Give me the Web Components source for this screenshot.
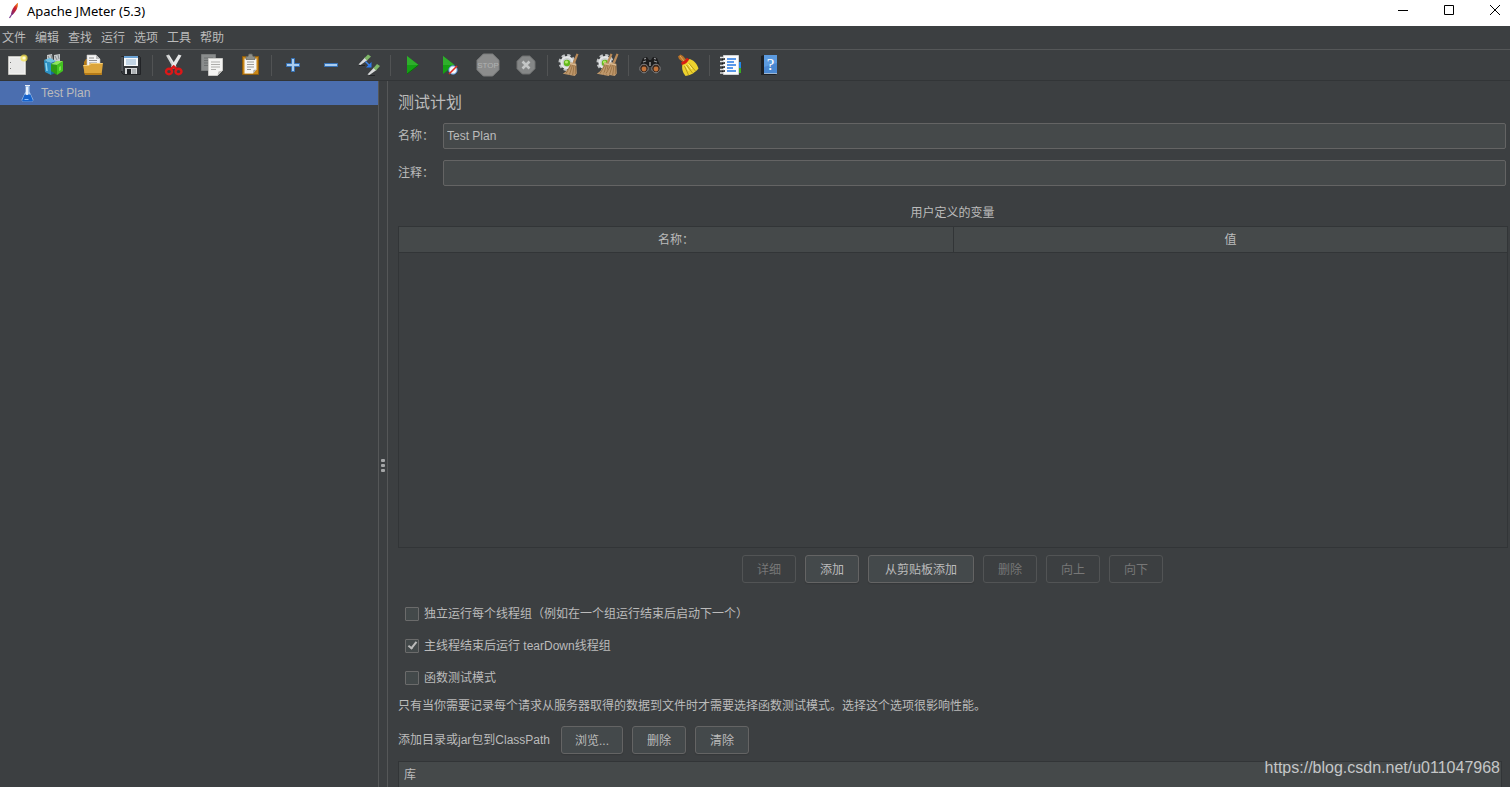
<!DOCTYPE html>
<html lang="zh-CN">
<head>
<meta charset="utf-8">
<title>Apache JMeter (5.3)</title>
<style>
  html, body { margin: 0; height: 100%; }
  body {
    --bg: #3c3f41; --fg: #bbbbbb; --field: #45494a; --edge: #646464;
    --dark: #323537; --line: #555758; --select: #4b6eaf; --dim: #777777;
    background: var(--bg); color: var(--fg);
    font: 12px/20px "Liberation Sans", "Noto Sans CJK SC", sans-serif;
  }
</style>
</head>
<body>
<jm-app></jm-app>
<script>
const define = (name, html, setup) => {
  const tpl = document.createElement('template');
  tpl.innerHTML = html;
  customElements.define(name, class extends HTMLElement {
    constructor() {
      super();
      this.attachShadow({ mode: 'open' }).append(tpl.content.cloneNode(true));
    }
    connectedCallback() { if (setup) setup(this, this.shadowRoot); }
  });
};

const GEAR = `
  <circle cx="10" cy="9.500" r="7" fill="none" stroke="#c3c6c7" stroke-width="3" stroke-dasharray="3.2 2.3"/>
  <circle cx="10" cy="9.500" r="6.600" fill="#e3e5e6"/><circle cx="10" cy="9.500" r="4.600" fill="#c9cdce"/>
  <circle cx="10" cy="10" r="3.200" fill="#62b81c"/><circle cx="9.500" cy="9" r="1.600" fill="#b4ea6a"/>`;
const BROOM = `
  <path d="M19.500 .5l2 .8-3.600 9.300-2.400-.9z" fill="#b98a58"/>
  <path d="M13.500 9.300l5.800 1.400.5 9.800-2 2.500-12-2.300c4-2 6.500-6 7.700-11.400z" fill="#bf986c"/>
  <path d="M14 12l-5 8.500M15.500 12l-3 9.500M17 12l-1.300 10M18.500 13l-.2 8" stroke="#8d6538" stroke-width=".7" fill="none"/>
  <path d="M13.200 10.500l6 1.500" stroke="#e0c299" stroke-width="1"/>`;
const OCT = 'M7.300 1h9.400L23 7.300v9.400L16.700 23H7.300L1 16.700V7.300z';

const ICONS = {
  'new': `<path d="M3.500 3.500h17v18h-17z" fill="#f0f0ef" stroke="#c2c2bd"/><path d="M5 5h14v15H5z" fill="#e8e8e7"/>
    <path d="M5 9h1v1H5zM5 15h1v1H5z" fill="#777"/>
    <circle cx="19" cy="5" r="3.600" fill="#f4e14c" opacity=".75"/><circle cx="19" cy="5" r="1.600" fill="#fffbd0"/>`,
  templates: `<path d="M4 2l5-1 1 7-6 1zM11 2l6-1v7l-6 1z" fill="#c5c9cb"/><path d="M5 3l2 4M12 3l2 4M8 2l1 4M15 2l1 4" stroke="#858b8e"/>
    <path d="M1 7l7 3v12l-6-3z" fill="#2d92c4"/><path d="M8 10l4-2v12l-4 2z" fill="#1a6a9a"/><path d="M1 7l6-2 6 3-5 2z" fill="#6ec0e4"/><path d="M3 10l1 8" stroke="#8fd6f2" stroke-width="1.500"/>
    <path d="M8 11l6 1v10l-6-4z" fill="#2f9a14"/><path d="M14 12l6-4v10l-6 4z" fill="#42c41f"/><path d="M8 11l6-3 6 0-6 4z" fill="#8be85a"/><path d="M16 14l2-1v4l-2 1z" fill="#7be04e"/>`,
  open: `<path d="M3 9l2-3h6v14H3z" fill="#b47a16"/><path d="M6 2h9l4 4v9H6z" fill="#f4f4f4" stroke="#c5c5c5" stroke-width=".6"/><path d="M15 2v4h4z" fill="#bbb"/>
    <path d="M8 5h5M8 7.500h8M8 10h8" stroke="#8d8d8d"/><path d="M2 12h6l2-2h12l-1.500 12H4z" fill="#dca53a"/><path d="M2.500 12.500H8l2-2h11.500" stroke="#f3ce7b" fill="none"/><path d="M3.500 20h17.500l-.5 2H4z" fill="#b57b18"/>`,
  save: `<path d="M2.500 3.500h18l1 1v17H4.500l-2-2z" fill="#34373b" stroke="#222427"/><path d="M5 3h14v10H5z" fill="#f7f9fb"/><path d="M5 3h14v2H5z" fill="#6ba2d4"/>
    <path d="M7 7h10M7 9h10M7 11h10" stroke="#8fb1cf"/><path d="M6 15h12v6H6z" fill="#d5d7d9"/><path d="M8 16h4v5H8z" fill="#202327"/><path d="M13 16h4v5h-4z" fill="#aeb2b5"/><path d="M3 4v14" stroke="#71757a"/>`,
  cut: `<path d="M4 2.500l3-1 7.500 12-3 2z" fill="#cfd1d1"/><path d="M19.500 2.500l-3-1-7.500 12 3 2z" fill="#e6e8e8"/><path d="M7 3l6 10" stroke="#f7f7f7" stroke-width=".8"/>
    <ellipse cx="7" cy="18.500" rx="3" ry="2.800" fill="none" stroke="#dd1717" stroke-width="2.400"/><ellipse cx="16.500" cy="18.500" rx="3" ry="2.800" fill="none" stroke="#dd1717" stroke-width="2.400"/>
    <path d="M9 16l2.700-2.500 2.700 2.500" stroke="#dd1717" stroke-width="2.400" fill="none"/>`,
  copy: `<path d="M1.500 1.500h14v16h-14z" fill="#898c8c" stroke="#787b7b"/><path d="M4 5h9M4 7.500h9M4 10h4M4 12.500h4" stroke="#6d7070"/>
    <path d="M8.500 5.500h14v12l-5 5h-9z" fill="#f4f4f2" stroke="#c9c9c6"/><path d="M11 9h9M11 11.500h9M11 14h9M11 16.500h5" stroke="#adadaa"/><path d="M17.500 22.500l1-4 4-1z" fill="#b5b5b2"/>`,
  paste: `<path d="M4.500 3.500h16v18h-16z" fill="#c98718" stroke="#8e5c0c"/><path d="M6.500 5.500h12v11l-3.500 4H6.500z" fill="#f6f6f4"/><path d="M9 9h7M9 11.500h7M9 14h7M9 16.500h4" stroke="#9b9b98"/>
    <path d="M15 20.500l.5-3.500 3-.5z" fill="#aaa"/><path d="M8 3.500h2L11 1h3l1 2.500h2v3H8z" fill="#8d8f8a" stroke="#62645f" stroke-width=".7"/>`,
  plus: `<path d="M10.500 5.500h3v5h5v3h-5v5h-3v-5h-5v-3h5z" fill="#a9cdf0" stroke="#3572b8"/>`,
  minus: `<path d="M5.500 10.500h13v3h-13z" fill="#a9cdf0" stroke="#3572b8"/>`,
  toggle: `<path d="M1.500 11.500l6.500-7 2.500 2.500-7 5z" fill="#d9dbdb"/><path d="M7.500 5L11 1.500l3 2-4 4z" fill="#7fb768"/><path d="M2 12.500h6" stroke="#242628"/>
    <path d="M10.500 21.500l6.500-7 2.500 2.500-7 5z" fill="#d9dbdb"/><path d="M16.500 15l3.500-4 3 2-4 4.500z" fill="#7fb768"/><path d="M12 22.500h6" stroke="#242628"/>
    <path d="M8.500 8.500l4 4" stroke="#3d86f0" stroke-width="1.500"/><path d="M14.500 9v5.500H9z" fill="#2f7cf0"/>`,
  start: `<path d="M7 3l11.500 9L7 21z" fill="#14a014"/><path d="M7 3l11.500 9H7z" fill="#2fae2c"/><path d="M7 21l11.500-9" stroke="#087008"/>`,
  startnt: `<path d="M5 3l11.500 9L5 21z" fill="#14a014"/><path d="M5 3l11.500 9H5z" fill="#2fae2c"/>
    <circle cx="15" cy="17" r="4.200" fill="#f3f6fa" stroke="#4d8bd0" stroke-width="1"/><path d="M11 21l8-8" stroke="#e02a1c" stroke-width="1.600"/>`,
  stop: `<path d="${OCT}" fill="#8b8c8c" stroke="#7b7d7d"/><text x="12" y="15" text-anchor="middle" font-family="Liberation Sans" font-weight="400" font-size="8" fill="#b0b2b2">STOP</text>`,
  shutdown: `<path d="M8.300 3h7.400L21 8.300v7.400L15.700 21H8.300L3 15.700V8.300z" fill="#858787" stroke="#6f7171"/><path d="M8.500 8.500l7 7M15.500 8.500l-7 7" stroke="#c4c6c6" stroke-width="2.600"/>`,
  clear: GEAR + BROOM,
  clearall: GEAR + `<g transform="translate(-4 0)">${BROOM}</g><g transform="translate(2 0)">${BROOM}</g>`,
  search: `<path d="M5 5l4-1 2 3h2l2-3 4 1 4 10-2 5h-6l-2-6h-2l-2 6H3l-2-5z" fill="#1c1c1d"/><path d="M6 6l2-.6M18 6l-2-.6M5 9l3-1M19 9l-3-1" stroke="#96989a" stroke-width="1.300"/>
    <circle cx="6" cy="15.500" r="4.300" fill="#3d2a20" stroke="#858789"/><circle cx="18" cy="15.500" r="4.300" fill="#3d2a20" stroke="#858789"/>
    <circle cx="6" cy="16" r="2.400" fill="#c2733a"/><circle cx="18" cy="16" r="2.400" fill="#c2733a"/><path d="M11 9h2v4h-2z" fill="#777"/>`,
  reset: `<path d="M2 3.500L4.500 1.500 7 3l3.500 4-3 2.500L3 6z" fill="#b87328"/><path d="M4 3l4 5" stroke="#e0a55c"/><path d="M6.500 10.500L12.500 6c5 .5 8 4 10 9.500-3.500 4-7 6.500-13 7.500-3-4-4-7-3-12.500z" fill="#edd22e"/>
    <path d="M8.500 13l4 9M10.500 12l6 8M12.500 10l7 8" stroke="#a98b10" stroke-width=".8"/><path d="M9.500 12.500l3 5M12 10.500l4 5.500" stroke="#fff28a"/><path d="M5.500 10.500c3-.5 5-2 6.500-5" stroke="#d71d12" stroke-width="2.800" fill="none"/>`,
  functions: `<path d="M19 9h3v6h-3z" fill="#2388e8"/><path d="M19 15h3v5h-3z" fill="#37ad22"/><path d="M4.500 2.500h15v19h-15z" fill="#fbfbfb" stroke="#cfd2d4"/>
    <path d="M8 6h9M8 9h7M8 12h9M8 15h6M8 18h9" stroke="#2478e4" stroke-width="1.300"/><path d="M3 6h3M3 10h3M3 14h3M3 18h3" stroke="#111" stroke-width="1.500"/><path d="M1 4.500h4M1 8.500h4M1 12.500h4M1 16.500h4M1 20h4" stroke="#ddd" stroke-width="1.500"/>`,
  help: `<path d="M4 3l3-1h13v19l-2 1H4z" fill="#1d2024"/><path d="M7 2h13v18H7z" fill="#4a88d2"/><path d="M7 2h13v8L7 14z" fill="#5c9be0"/><path d="M7 20.500h13" stroke="#9fb6cf"/>
    <text x="13.500" y="17" text-anchor="middle" font-family="Liberation Serif" font-size="17" fill="#fff">?</text>`,
};

define('jm-icon', `<style>:host{display:block;width:24px;height:24px}svg{display:block;width:100%;height:100%}</style>
  <svg viewBox="0 0 24 24" fill="none" aria-hidden="true"></svg>`,
  (el, root) => { root.querySelector('svg').innerHTML = ICONS[el.getAttribute('name')]; });

define('jm-titlebar', `<style>
    :host{display:flex;flex:none;align-items:center;height:26px;background:#fff;color:#000;font-family:"Noto Sans","Liberation Sans",sans-serif;font-size:13px}
    .logo{width:12px;height:18px;margin:0 7px 6px 8px}
    span{flex:1;margin-bottom:5px}
    button{all:unset;width:30px;height:20px;margin-bottom:6px;display:grid;place-items:center}
    .controls{display:flex;gap:16px}
  </style>
  <svg class="logo" viewBox="0 0 12 18"><defs><linearGradient id="f" x1="1" y1="0" x2="0" y2="1"><stop offset="0" stop-color="#f69923"/><stop offset=".4" stop-color="#d22128"/><stop offset="1" stop-color="#6d2a84"/></linearGradient></defs>
    <path d="M8 3.500C9 2 10 1.500 10 2.500c.2 4-2 8-5.500 11.500L3 13c.5-4 2.500-7 5-9.500z" fill="url(#f)"/><path d="M4 13l-2.500 4" stroke="#7b3a90" stroke-width="1.200"/></svg>
  <span><slot></slot></span>
  <div class="controls">
  <button aria-label="最小化"><svg width="10" height="10"><path d="M0 5.500h10" stroke="#000"/></svg></button>
  <button aria-label="最大化"><svg width="10" height="10"><path d="M.5.5h9v9h-9z" fill="none" stroke="#000"/></svg></button>
  <button aria-label="关闭"><svg width="10" height="10"><path d="M0 0l10 10M10 0L0 10" stroke="#000"/></svg></button>
  </div>`);

define('jm-menubar', `<style>
    :host{display:flex;flex:none;gap:9px;height:23px;padding-left:2px;border-bottom:1px solid var(--line)}
    ::slotted(button){all:unset;line-height:22px}
  </style><slot></slot>`);

define('jm-toolbar', `<style>
    :host{display:flex;flex:none;align-items:center;gap:4px;height:30px;border-bottom:1px solid var(--dark)}
    button{all:unset;width:34px;height:28px;display:grid;place-items:center}
    i{width:1px;height:21px;background:#515354}
  </style>`,
  (el, root) => {
    const groups = [
      [['new', '新建'], ['templates', '模板'], ['open', '打开'], ['save', '保存']],
      [['cut', '剪切'], ['copy', '复制'], ['paste', '粘贴']],
      [['plus', '展开'], ['minus', '折叠'], ['toggle', '切换']],
      [['start', '启动'], ['startnt', '不停顿开始'], ['stop', '停止'], ['shutdown', '关闭']],
      [['clear', '清除'], ['clearall', '清除全部']],
      [['search', '查找'], ['reset', '重置查找']],
      [['functions', '函数助手'], ['help', '帮助']],
    ];
    root.innerHTML += groups.map(g => g.map(([n, t]) =>
      `<button aria-label="${t}"><jm-icon name="${n}"></jm-icon></button>`).join('')).join('<i></i>');
  });

define('jm-tree', `<style>
    :host{display:block;flex:0 0 378px;width:378px}
    div{display:flex;align-items:center;height:24px;padding-left:21px;gap:7px;background:var(--select)}
    svg{width:13px;height:18px}
  </style>
  <div role="treeitem" aria-selected="true"><svg viewBox="0 0 13 18"><path d="M4.500 2h4v5.500L12.500 16l-1 1.500h-10L.5 16l4-8.500z" fill="#a9c8ee"/><path d="M3.500 10.500h6l2.500 6-1 1H2l-1-1z" fill="#1663cc"/><path d="M6 3v8" stroke="#fff" stroke-width="1.500"/><path d="M4 1.500h5" stroke="#e9eef5"/><path d="M3.500 15.500h4" stroke="#8cc0ff"/></svg><slot></slot></div>`);

define('jm-splitter', `<style>
    :host{display:grid;flex:0 0 8px;place-content:center;gap:2px;padding-top:62px;border:solid var(--line);border-width:0 1px}
    i{width:4px;height:3px;border-radius:1px;background:#a4a6a7}
  </style><i></i><i></i><i></i>`);

define('jm-field', `<style>
    :host{display:flex;align-items:center;margin-right:4px}
    label{flex:0 0 45px}
    input{flex:1;min-width:0;box-sizing:border-box;height:26px;margin:0;padding:0 3px;border:1px solid var(--edge);border-radius:2px;background:var(--field);color:var(--fg);font:inherit;outline:0}
  </style><label for="v"></label><input id="v" type="text">`,
  (el, root) => {
    root.querySelector('label').textContent = el.getAttribute('label');
    root.querySelector('input').value = el.getAttribute('value') || '';
  });

define('jm-grid', `<style>
    :host{display:block;box-sizing:border-box;border:1px solid var(--dark);overflow:hidden}
    table{width:100%;border-collapse:separate;border-spacing:0;table-layout:fixed}
    th{height:24px;box-sizing:content-box;padding:1px 5px 0;background:var(--field);border-bottom:1px solid var(--dark);font-weight:400;text-align:center}
    th+th{border-left:1px solid var(--dark)}
    :host([lead]) th{text-align:left}
  </style><table><thead><tr></tr></thead><tbody></tbody></table>`,
  (el, root) => {
    root.querySelector('tr').innerHTML = el.getAttribute('columns').split('|').map(c => `<th scope="col">${c}</th>`).join('');
  });

define('jm-button', `<style>
    :host{display:block}
    button{display:block;box-sizing:border-box;height:28px;min-width:54px;margin:0;padding:1px 13px 0;border:1px solid var(--edge);border-radius:3px;background:#44494b;color:var(--fg);font:inherit;box-shadow:0 1px 1px #35383a}
    :host([wide]) button{padding:1px 16px 0}
    button:disabled{background:none;border-color:#525455;color:var(--dim);box-shadow:none}
  </style><button><slot></slot></button>`,
  (el, root) => { root.querySelector('button').disabled = el.hasAttribute('disabled'); });

define('jm-check', `<style>
    :host{display:flex;align-items:center;height:32px;padding-left:7px}
    label{display:flex;align-items:center;gap:5px}
    input{appearance:none;box-sizing:border-box;width:14px;height:14px;margin:0;border:1px solid #6b6b6b;border-radius:1px;background:#43494a;display:grid}
    input:checked::after{content:"";width:3px;height:7px;margin:0 0 0 4px;border:solid #bbb;border-width:0 2px 2px 0;transform:rotate(38deg)}
  </style><label><input type="checkbox"><span><slot></slot></span></label>`,
  (el, root) => { root.querySelector('input').checked = el.hasAttribute('checked'); });

define('jm-plan', `<style>
    :host{display:flex;flex:1;flex-direction:column;min-width:0;padding:11px 0 0 10px}
    h1{margin:0 0 9px;font-size:16px;line-height:22px;font-weight:400}
    h2{margin:17px 3px 3px 0;font-size:12px;line-height:20px;font-weight:400;text-align:center}
    jm-field+jm-field{margin-top:11px}
    .vars{flex:1 1 0;min-height:200px;margin-right:2px}
    .actions{display:flex;justify-content:center;gap:9px;margin:7px 3px 15px 0}
    p{margin:2px 0 10px}
    .path{display:flex;align-items:center;gap:9px;margin-bottom:7px}
    .path span{flex:0 0 154px}
    .libs{flex:0 0 26px;margin-right:8px;border-bottom:0}
  </style>
  <h1>测试计划</h1>
  <jm-field label="名称：" value="Test Plan"></jm-field>
  <jm-field label="注释："></jm-field>
  <h2>用户定义的变量</h2>
  <jm-grid class="vars" columns="名称：|值"></jm-grid>
  <div class="actions">
    <jm-button disabled>详细</jm-button><jm-button>添加</jm-button><jm-button wide>从剪贴板添加</jm-button>
    <jm-button disabled>删除</jm-button><jm-button disabled>向上</jm-button><jm-button disabled>向下</jm-button>
  </div>
  <jm-check>独立运行每个线程组（例如在一个组运行结束后启动下一个）</jm-check>
  <jm-check checked>主线程结束后运行 tearDown线程组</jm-check>
  <jm-check>函数测试模式</jm-check>
  <p>只有当你需要记录每个请求从服务器取得的数据到文件时才需要选择函数测试模式。选择这个选项很影响性能。</p>
  <div class="path"><span>添加目录或jar包到ClassPath</span><jm-button>浏览...</jm-button><jm-button>删除</jm-button><jm-button>清除</jm-button></div>
  <jm-grid class="libs" lead columns="库"></jm-grid>`);

define('jm-app', `<style>
    :host{display:flex;flex-direction:column;height:100vh;overflow:hidden;position:relative}
    main{display:flex;flex:1;min-height:0}
    .mark{position:absolute;right:10px;bottom:9px;font-size:16px;color:#c4c6c7}
  </style>
  <jm-titlebar>Apache JMeter (5.3)</jm-titlebar>
  <jm-menubar><button>文件</button><button>编辑</button><button>查找</button><button>运行</button><button>选项</button><button>工具</button><button>帮助</button></jm-menubar>
  <jm-toolbar></jm-toolbar>
  <main><jm-tree>Test Plan</jm-tree><jm-splitter></jm-splitter><jm-plan></jm-plan></main>
  <span class="mark">https://blog.csdn.net/u011047968</span>`);
</script>
</body>
</html>
